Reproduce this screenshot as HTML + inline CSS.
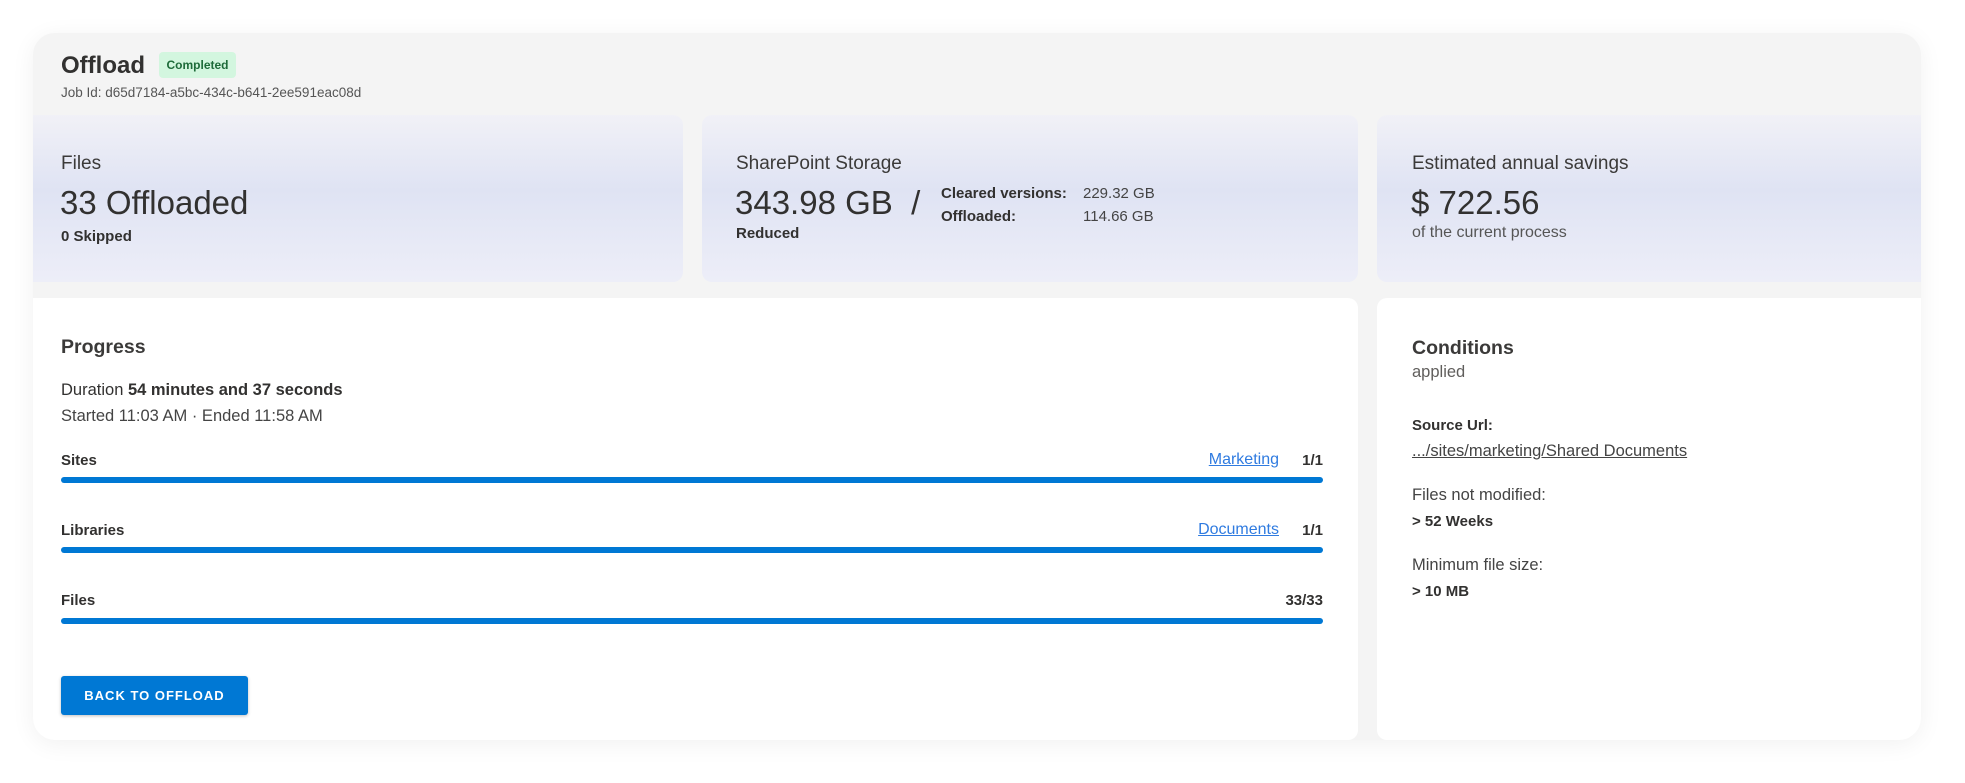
<!DOCTYPE html>
<html><head><meta charset="utf-8"><style>
*{margin:0;padding:0;box-sizing:border-box}
body{width:1965px;height:783px;background:#fff;font-family:"Liberation Sans",sans-serif;color:#323130;position:relative;overflow:hidden}
.abs{position:absolute;white-space:nowrap}
.outer{position:absolute;left:33px;top:33px;width:1888px;height:707px;background:#f4f4f4;border-radius:22px;box-shadow:0 4px 24px rgba(0,0,0,0.06)}
.stat{position:absolute;top:115px;height:167px;border-radius:10px;background:linear-gradient(#f1f1f7 0%,#dfe3f3 45%,#edeef8 100%)}
.white{position:absolute;top:298px;height:442px;background:#fff;border-radius:10px}
.bar{position:absolute;left:61px;width:1262px;height:6px;background:#0078d4;border-radius:3px}
.lbl{font-size:15px;font-weight:bold}
a{color:#2f7be0;text-decoration:underline}
</style></head><body>
<div class="outer"></div>
<div class="abs" style="left:61px;top:52px;font-size:24px;font-weight:bold;color:#323130">Offload</div>
<div class="abs" style="left:159px;top:52px;width:77px;height:26px;background:#d3f6df;border-radius:4px;font-size:12px;font-weight:bold;color:#1e6b3a;text-align:center;line-height:26px">Completed</div>
<div class="abs" style="left:61px;top:85px;font-size:13.5px;color:#555">Job Id: d65d7184-a5bc-434c-b641-2ee591eac08d</div>

<div class="stat" style="left:33px;width:650px;border-top-left-radius:0;border-bottom-left-radius:0"></div>
<div class="stat" style="left:702px;width:656px"></div>
<div class="stat" style="left:1377px;width:544px;border-top-right-radius:0;border-bottom-right-radius:0"></div>

<div class="abs" style="left:61px;top:153px;font-size:19px;color:#3b3a39">Files</div>
<div class="abs" style="left:60px;top:184px;font-size:33px;color:#323130">33 Offloaded</div>
<div class="abs" style="left:61px;top:228px;font-size:15px;font-weight:bold">0 Skipped</div>

<div class="abs" style="left:736px;top:153px;font-size:19px;color:#3b3a39">SharePoint Storage</div>
<div class="abs" style="left:735px;top:184px;font-size:33px;color:#323130">343.98 GB &nbsp;/</div>
<div class="abs" style="left:736px;top:225px;font-size:15px;font-weight:bold">Reduced</div>
<div class="abs" style="left:941px;top:185px;font-size:15px;font-weight:bold">Cleared versions:</div>
<div class="abs" style="left:941px;top:208px;font-size:15px;font-weight:bold">Offloaded:</div>
<div class="abs" style="left:1083px;top:185px;font-size:15px;color:#444">229.32 GB</div>
<div class="abs" style="left:1083px;top:208px;font-size:15px;color:#444">114.66 GB</div>

<div class="abs" style="left:1412px;top:153px;font-size:19px;color:#3b3a39">Estimated annual savings</div>
<div class="abs" style="left:1411px;top:184px;font-size:33px;color:#323130">$ 722.56</div>
<div class="abs" style="left:1412px;top:224px;font-size:16px;color:#555">of the current process</div>

<div class="white" style="left:33px;width:1325px;border-top-left-radius:0;border-bottom-left-radius:22px"></div>
<div class="white" style="left:1377px;width:544px;border-top-right-radius:0;border-bottom-right-radius:22px"></div>

<div class="abs" style="left:61px;top:336px;font-size:19.5px;font-weight:bold;color:#3b3a39">Progress</div>
<div class="abs" style="left:61px;top:381px;font-size:16.5px">Duration <b>54 minutes and 37 seconds</b></div>
<div class="abs" style="left:61px;top:407px;font-size:16.5px;color:#444">Started 11:03 AM · Ended 11:58 AM</div>

<div class="abs lbl" style="left:61px;top:452px">Sites</div>
<div class="abs" style="right:686px;top:451px;font-size:16px"><a>Marketing</a></div>
<div class="abs lbl" style="right:642px;top:452px">1/1</div>
<div class="bar" style="top:477px"></div>

<div class="abs lbl" style="left:61px;top:522px">Libraries</div>
<div class="abs" style="right:686px;top:521px;font-size:16px"><a>Documents</a></div>
<div class="abs lbl" style="right:642px;top:522px">1/1</div>
<div class="bar" style="top:547px"></div>

<div class="abs lbl" style="left:61px;top:592px">Files</div>
<div class="abs lbl" style="right:642px;top:592px">33/33</div>
<div class="bar" style="top:618px"></div>

<div class="abs" style="left:61px;top:676px;width:187px;height:39px;background:#0078d4;border-radius:3px;box-shadow:0 1px 3px rgba(0,0,0,0.25);color:#fff;font-size:13px;font-weight:bold;letter-spacing:1px;text-align:center;line-height:39px">BACK TO OFFLOAD</div>

<div class="abs" style="left:1412px;top:337px;font-size:19.5px;font-weight:bold;color:#3b3a39">Conditions</div>
<div class="abs" style="left:1412px;top:363px;font-size:16.5px;color:#605e5c">applied</div>
<div class="abs lbl" style="left:1412px;top:417px">Source Url:</div>
<div class="abs" style="left:1412px;top:442px;font-size:16.5px;color:#444;text-decoration:underline">.../sites/marketing/Shared Documents</div>
<div class="abs" style="left:1412px;top:486px;font-size:16.5px;color:#444">Files not modified:</div>
<div class="abs lbl" style="left:1412px;top:513px">&gt; 52 Weeks</div>
<div class="abs" style="left:1412px;top:556px;font-size:16.5px;color:#444">Minimum file size:</div>
<div class="abs lbl" style="left:1412px;top:583px">&gt; 10 MB</div>
</body></html>
